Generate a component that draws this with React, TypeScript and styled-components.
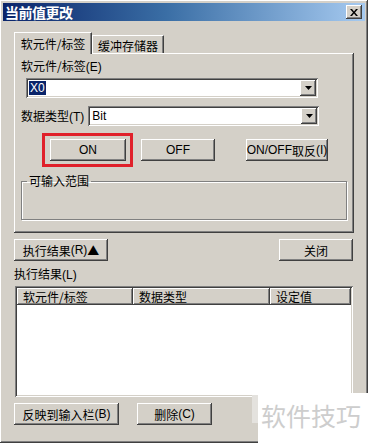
import styled, { createGlobalStyle } from 'styled-components';

const GlobalStyle = createGlobalStyle`
  html, body {
    margin: 0;
    padding: 0;
    background: #ffffff;
  }
  body {
    font-family: "Noto Sans CJK SC", "DejaVu Sans", sans-serif;
    font-size: 12px;
    color: #000;
  }
`;

const FACE = '#d4d0c8';

const raised = `
  box-shadow: inset -1px -1px #404040, inset 1px 1px #ffffff, inset -2px -2px #808080, inset 2px 2px ${FACE};
`;

const sunken = `
  box-shadow: inset 1px 1px #808080, inset -1px -1px #ffffff, inset 2px 2px #404040, inset -2px -2px ${FACE};
`;

const Window = styled.div`
  position: relative;
  width: 368px;
  height: 443px;
  box-sizing: border-box;
  background: ${FACE};
  ${raised}
  overflow: hidden;
`;

const TitleBar = styled.div`
  display: flex;
  align-items: center;
  justify-content: space-between;
  height: 18px;
  margin: 3px 3px 0 3px;
  padding: 0 3px 0 2px;
  background: linear-gradient(to right, #0a246a 0%, #3a6ea5 45%, #a6caf0 100%);
`;

const TitleText = styled.span`
  color: #ffffff;
  font-weight: bold;
  font-size: 14px;
  letter-spacing: -0.5px;
`;

const CloseBox = styled.div`
  display: flex;
  align-items: center;
  justify-content: center;
  width: 16px;
  height: 14px;
  background: ${FACE};
  ${raised}
`;

const Body = styled.div`
  display: flex;
  flex-direction: column;
  padding: 10px 0 0 14px;
`;

const TabStrip = styled.div`
  display: flex;
  align-items: flex-end;
  height: 22px;
  position: relative;
  z-index: 2;
`;

const Tab = styled.div<{ $active?: boolean }>`
  display: flex;
  align-items: center;
  justify-content: center;
  box-sizing: border-box;
  height: ${(p) => (p.$active ? '22px' : '18px')};
  width: ${(p) => (p.$active ? '78px' : '72px')};
  padding-top: ${(p) => (p.$active ? '0' : '1px')};
  background: ${FACE};
  border-top: 1px solid #ffffff;
  border-left: 1px solid #ffffff;
  border-right: 1px solid #404040;
  box-shadow: inset -1px 0 #808080;
  margin-bottom: ${(p) => (p.$active ? '-1px' : '0')};
  font-size: 12px;
`;

const TabPanel = styled.div`
  box-sizing: border-box;
  width: 340px;
  height: 180px;
  padding: 6px 0 0 7px;
  background: ${FACE};
  ${raised}
  display: flex;
  flex-direction: column;
`;

const FieldLabel = styled.div`
  height: 14px;
  line-height: 14px;
`;

const Combo = styled.div<{ $width: number }>`
  display: flex;
  align-items: center;
  justify-content: space-between;
  box-sizing: border-box;
  width: ${(p) => p.$width}px;
  height: 20px;
  padding: 2px 2px 2px 3px;
  background: #ffffff;
  ${sunken}
`;

const ComboText = styled.span<{ $selected?: boolean }>`
  padding: 0 1px;
  line-height: 14px;
  font-family: "Liberation Sans", "Noto Sans CJK SC", sans-serif;
  font-size: 12px;
  background: ${(p) => (p.$selected ? '#0a246a' : 'transparent')};
  color: ${(p) => (p.$selected ? '#ffffff' : '#000000')};
`;

const ArrowButton = styled.div`
  display: flex;
  align-items: center;
  justify-content: center;
  width: 16px;
  height: 16px;
  background: ${FACE};
  ${raised}
`;

const ComboRow = styled.div<{ $indent: number; $top: number }>`
  display: flex;
  align-items: center;
  gap: 2px;
  margin-top: ${(p) => p.$top}px;
  margin-left: ${(p) => p.$indent}px;
`;

const ButtonRow = styled.div`
  display: flex;
  align-items: center;
  margin-top: 13px;
  height: 22px;
`;

const Button = styled.div<{ $width: number; $ml?: number }>`
  display: flex;
  align-items: center;
  justify-content: center;
  box-sizing: border-box;
  width: ${(p) => p.$width}px;
  height: 22px;
  margin-left: ${(p) => p.$ml ?? 0}px;
  background: ${FACE};
  ${raised}
  font-size: 12px;
  white-space: nowrap;
`;

const Latin = styled.span`
  font-family: "Liberation Sans", sans-serif;
`;

const Highlight = styled.div`
  position: relative;
`;

const RedFrame = styled.div`
  position: absolute;
  left: -8px;
  top: -6px;
  right: -7px;
  bottom: -6px;
  border: 3px solid #e0202a;
`;

const GroupBox = styled.fieldset`
  box-sizing: border-box;
  width: 326px;
  height: 45px;
  margin: 14px 0 0 0;
  padding: 0;
  border: 1px solid #808080;
  box-shadow: 1px 1px #ffffff, inset 1px 1px #ffffff;
`;

const GroupLegend = styled.legend`
  padding: 0 2px;
  margin-left: 5px;
  font-size: 12px;
  line-height: 12px;
`;

const ActionRow = styled.div`
  display: flex;
  justify-content: space-between;
  width: 339px;
  margin-top: 6px;
`;

const SectionLabel = styled.div`
  margin-top: 5px;
  height: 16px;
  line-height: 16px;
`;

const ListView = styled.div`
  box-sizing: border-box;
  width: 338px;
  height: 111px;
  margin-top: 4px;
  margin-left: 1px;
  padding: 2px;
  background: #ffffff;
  ${sunken}
`;

const HeaderRow = styled.div`
  display: flex;
  height: 17px;
`;

const HeaderCell = styled.div<{ $width: number }>`
  box-sizing: border-box;
  width: ${(p) => p.$width}px;
  height: 17px;
  padding-left: 6px;
  line-height: 17px;
  background: ${FACE};
  ${raised}
  font-size: 12px;
`;

const BottomRow = styled.div`
  display: flex;
  margin-top: 6px;
`;

const Watermark = styled.div`
  position: absolute;
  left: 258px;
  top: 393px;
  width: 110px;
  height: 50px;
  background: #ffffff;
  display: flex;
  align-items: center;
  padding: 0 0 6px 3px;
  box-sizing: border-box;
  color: #cdcdcd;
  font-size: 25px;
  letter-spacing: 0;
`;

const WatermarkLogo = styled.div`
  position: absolute;
  left: 252px;
  top: 395px;
  width: 7px;
  height: 28px;
  background: #e4e2de;
`;

const Arrow = () => (
  <svg width="7" height="4" viewBox="0 0 7 4">
    <path d="M0 0h7L3.5 4z" fill="#000" />
  </svg>
);

const CloseIcon = () => (
  <svg width="8" height="7" viewBox="0 0 8 7">
    <path d="M0 0h2l2 2.5L6 0h2L5 3.5 8 7H6L4 4.5 2 7H0l3-3.5z" fill="#000" />
  </svg>
);

export default function App() {
  return (
    <>
      <GlobalStyle />
      <Window>
        <TitleBar>
          <TitleText>当前值更改</TitleText>
          <CloseBox>
            <CloseIcon />
          </CloseBox>
        </TitleBar>
        <Body>
          <TabStrip>
            <Tab $active>软元件/标签</Tab>
            <Tab>缓冲存储器</Tab>
          </TabStrip>
          <TabPanel>
            <FieldLabel>
              软元件/标签<Latin>(E)</Latin>
            </FieldLabel>
            <ComboRow $indent={5} $top={5}>
              <Combo $width={292}>
                <ComboText $selected>X0</ComboText>
                <ArrowButton>
                  <Arrow />
                </ArrowButton>
              </Combo>
            </ComboRow>
            <ComboRow $indent={0} $top={8}>
              <FieldLabel>
                数据类型<Latin>(T)</Latin>
              </FieldLabel>
              <Combo $width={231} style={{ marginLeft: 2 }}>
                <ComboText>Bit</ComboText>
                <ArrowButton>
                  <Arrow />
                </ArrowButton>
              </Combo>
            </ComboRow>
            <ButtonRow>
              <Highlight style={{ marginLeft: 29 }}>
                <Button $width={76}>
                  <Latin>ON</Latin>
                </Button>
                <RedFrame />
              </Highlight>
              <Button $width={74} $ml={15}>
                <Latin>OFF</Latin>
              </Button>
              <Button $width={82} $ml={31}>
                <Latin>ON/OFF</Latin>取反<Latin>(I)</Latin>
              </Button>
            </ButtonRow>
            <GroupBox>
              <GroupLegend>可输入范围</GroupLegend>
            </GroupBox>
          </TabPanel>
          <ActionRow>
            <Button $width={94}>
              执行结果<Latin>(R)</Latin>▲
            </Button>
            <Button $width={74}>关闭</Button>
          </ActionRow>
          <SectionLabel>
            执行结果<Latin>(L)</Latin>
          </SectionLabel>
          <ListView>
            <HeaderRow>
              <HeaderCell $width={116}>软元件/标签</HeaderCell>
              <HeaderCell $width={137}>数据类型</HeaderCell>
              <HeaderCell $width={81}>设定值</HeaderCell>
            </HeaderRow>
          </ListView>
          <BottomRow>
            <Button $width={105}>
              反映到输入栏<Latin>(B)</Latin>
            </Button>
            <Button $width={75} $ml={18}>
              删除<Latin>(C)</Latin>
            </Button>
          </BottomRow>
        </Body>
        <WatermarkLogo />
        <Watermark>软件技巧</Watermark>
      </Window>
    </>
  );
}
